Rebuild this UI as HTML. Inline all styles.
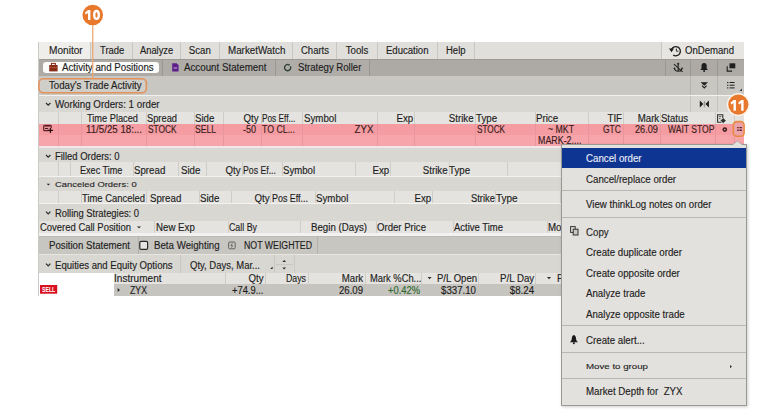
<!DOCTYPE html><html><head><meta charset="utf-8"><style>
html,body{margin:0;padding:0;width:780px;height:414px;overflow:hidden;background:#fff;position:relative}
body{font-family:"Liberation Sans",sans-serif;font-size:10.0px;color:#1e1e1e}
.r{position:absolute}
.t{position:absolute;white-space:nowrap;line-height:12px;-webkit-text-stroke:0.15px currentColor}
.m{transform:scaleX(0.97);transform-origin:0 50%}
</style></head><body>
<div class="r" style="left:39px;top:42px;width:705px;height:17px;background:#e0dfdb;"></div>
<div class="r" style="left:39px;top:42px;width:51px;height:17px;background:#efeeeb;"></div>
<div class="r" style="left:661px;top:42px;width:83px;height:17px;background:#e6e5e1;"></div>
<div class="r" style="left:90px;top:42px;width:1px;height:17px;background:#c9c7c2;"></div>
<div class="r" style="left:132px;top:42px;width:1px;height:17px;background:#c9c7c2;"></div>
<div class="r" style="left:180px;top:42px;width:1px;height:17px;background:#c9c7c2;"></div>
<div class="r" style="left:219px;top:42px;width:1px;height:17px;background:#c9c7c2;"></div>
<div class="r" style="left:292px;top:42px;width:1px;height:17px;background:#c9c7c2;"></div>
<div class="r" style="left:336px;top:42px;width:1px;height:17px;background:#c9c7c2;"></div>
<div class="r" style="left:377px;top:42px;width:1px;height:17px;background:#c9c7c2;"></div>
<div class="r" style="left:437px;top:42px;width:1px;height:17px;background:#c9c7c2;"></div>
<div class="r" style="left:474px;top:42px;width:1px;height:17px;background:#c9c7c2;"></div>
<div class="r" style="left:661px;top:42px;width:1px;height:17px;background:#c9c7c2;"></div>
<div class="r" style="left:39px;top:59px;width:705px;height:17px;background:#adaaa5;"></div>
<div class="r" style="left:162px;top:59px;width:207px;height:17px;background:#b0ada8;"></div>
<div class="r" style="left:39px;top:59px;width:705px;height:1px;background:#9d9a95;"></div>
<div class="r" style="left:162px;top:59px;width:1px;height:17px;background:#9a9792;"></div>
<div class="r" style="left:275px;top:59px;width:1px;height:17px;background:#9a9792;"></div>
<div class="r" style="left:369px;top:59px;width:1px;height:17px;background:#9a9792;"></div>
<div class="r" style="left:665px;top:59px;width:1px;height:17px;background:#9a9792;"></div>
<div class="r" style="left:690px;top:59px;width:1px;height:17px;background:#9a9792;"></div>
<div class="r" style="left:717px;top:59px;width:1px;height:17px;background:#9a9792;"></div>
<div class="r" style="left:39px;top:76px;width:705px;height:19px;background:#c9c7c2;"></div>
<div class="r" style="left:40px;top:79.5px;width:106px;height:12.5px;background:#d0cec9;"></div>
<div class="r" style="left:690px;top:76px;width:1px;height:19px;background:#b6b4af;"></div>
<div class="r" style="left:717px;top:76px;width:1px;height:19px;background:#b6b4af;"></div>
<div class="r" style="left:39px;top:95px;width:705px;height:1px;background:#f3f2f0;"></div>
<div class="r" style="left:39px;top:96px;width:705px;height:16px;background:#d9d7d2;"></div>
<div class="r" style="left:690px;top:96px;width:1px;height:16px;background:#c6c4bf;"></div>
<div class="r" style="left:717px;top:96px;width:1px;height:16px;background:#c6c4bf;"></div>
<div class="r" style="left:39px;top:112px;width:705px;height:12px;background:#e4e3df;"></div>
<div class="r" style="left:58px;top:112px;width:1px;height:12px;background:#cfcdc8;"></div>
<div class="r" style="left:81px;top:112px;width:1px;height:12px;background:#cfcdc8;"></div>
<div class="r" style="left:146px;top:112px;width:1px;height:12px;background:#cfcdc8;"></div>
<div class="r" style="left:194px;top:112px;width:1px;height:12px;background:#cfcdc8;"></div>
<div class="r" style="left:223px;top:112px;width:1px;height:12px;background:#cfcdc8;"></div>
<div class="r" style="left:261px;top:112px;width:1px;height:12px;background:#cfcdc8;"></div>
<div class="r" style="left:302px;top:112px;width:1px;height:12px;background:#cfcdc8;"></div>
<div class="r" style="left:377px;top:112px;width:1px;height:12px;background:#cfcdc8;"></div>
<div class="r" style="left:414px;top:112px;width:1px;height:12px;background:#cfcdc8;"></div>
<div class="r" style="left:475px;top:112px;width:1px;height:12px;background:#cfcdc8;"></div>
<div class="r" style="left:535px;top:112px;width:1px;height:12px;background:#cfcdc8;"></div>
<div class="r" style="left:588px;top:112px;width:1px;height:12px;background:#cfcdc8;"></div>
<div class="r" style="left:623px;top:112px;width:1px;height:12px;background:#cfcdc8;"></div>
<div class="r" style="left:660px;top:112px;width:1px;height:12px;background:#cfcdc8;"></div>
<div class="r" style="left:715px;top:112px;width:1px;height:12px;background:#cfcdc8;"></div>
<div class="r" style="left:734px;top:112px;width:1px;height:12px;background:#cfcdc8;"></div>
<div class="r" style="left:39px;top:124px;width:705px;height:11px;background:#f49ca2;"></div>
<div class="r" style="left:39px;top:135px;width:705px;height:11px;background:#f7a4aa;"></div>
<div class="r" style="left:58px;top:124px;width:1px;height:22px;background:#e8959b;"></div>
<div class="r" style="left:81px;top:124px;width:1px;height:22px;background:#e8959b;"></div>
<div class="r" style="left:146px;top:124px;width:1px;height:22px;background:#e8959b;"></div>
<div class="r" style="left:194px;top:124px;width:1px;height:22px;background:#e8959b;"></div>
<div class="r" style="left:223px;top:124px;width:1px;height:22px;background:#e8959b;"></div>
<div class="r" style="left:261px;top:124px;width:1px;height:22px;background:#e8959b;"></div>
<div class="r" style="left:302px;top:124px;width:1px;height:22px;background:#e8959b;"></div>
<div class="r" style="left:377px;top:124px;width:1px;height:22px;background:#e8959b;"></div>
<div class="r" style="left:414px;top:124px;width:1px;height:22px;background:#e8959b;"></div>
<div class="r" style="left:475px;top:124px;width:1px;height:22px;background:#e8959b;"></div>
<div class="r" style="left:535px;top:124px;width:1px;height:22px;background:#e8959b;"></div>
<div class="r" style="left:588px;top:124px;width:1px;height:22px;background:#e8959b;"></div>
<div class="r" style="left:623px;top:124px;width:1px;height:22px;background:#e8959b;"></div>
<div class="r" style="left:660px;top:124px;width:1px;height:22px;background:#e8959b;"></div>
<div class="r" style="left:715px;top:124px;width:1px;height:22px;background:#e8959b;"></div>
<div class="r" style="left:734px;top:124px;width:1px;height:22px;background:#e8959b;"></div>
<div class="r" style="left:39px;top:146px;width:705px;height:2px;background:#f3e6e6;"></div>
<div class="r" style="left:39px;top:148px;width:705px;height:14px;background:#d9d7d2;"></div>
<div class="r" style="left:39px;top:162px;width:705px;height:14px;background:#e4e3df;"></div>
<div class="r" style="left:58px;top:162px;width:1px;height:14px;background:#cfcdc8;"></div>
<div class="r" style="left:70px;top:162px;width:1px;height:14px;background:#cfcdc8;"></div>
<div class="r" style="left:133px;top:162px;width:1px;height:14px;background:#cfcdc8;"></div>
<div class="r" style="left:178px;top:162px;width:1px;height:14px;background:#cfcdc8;"></div>
<div class="r" style="left:206px;top:162px;width:1px;height:14px;background:#cfcdc8;"></div>
<div class="r" style="left:242px;top:162px;width:1px;height:14px;background:#cfcdc8;"></div>
<div class="r" style="left:282px;top:162px;width:1px;height:14px;background:#cfcdc8;"></div>
<div class="r" style="left:355px;top:162px;width:1px;height:14px;background:#cfcdc8;"></div>
<div class="r" style="left:390px;top:162px;width:1px;height:14px;background:#cfcdc8;"></div>
<div class="r" style="left:449px;top:162px;width:1px;height:14px;background:#cfcdc8;"></div>
<div class="r" style="left:507px;top:162px;width:1px;height:14px;background:#cfcdc8;"></div>
<div class="r" style="left:39px;top:176px;width:705px;height:1px;background:#f3f2f0;"></div>
<div class="r" style="left:39px;top:177px;width:705px;height:14px;background:#d9d7d2;"></div>
<div class="r" style="left:39px;top:191px;width:705px;height:12px;background:#e4e3df;"></div>
<div class="r" style="left:58px;top:191px;width:1px;height:12px;background:#cfcdc8;"></div>
<div class="r" style="left:81px;top:191px;width:1px;height:12px;background:#cfcdc8;"></div>
<div class="r" style="left:146px;top:191px;width:1px;height:12px;background:#cfcdc8;"></div>
<div class="r" style="left:199px;top:191px;width:1px;height:12px;background:#cfcdc8;"></div>
<div class="r" style="left:231px;top:191px;width:1px;height:12px;background:#cfcdc8;"></div>
<div class="r" style="left:270px;top:191px;width:1px;height:12px;background:#cfcdc8;"></div>
<div class="r" style="left:315px;top:191px;width:1px;height:12px;background:#cfcdc8;"></div>
<div class="r" style="left:394px;top:191px;width:1px;height:12px;background:#cfcdc8;"></div>
<div class="r" style="left:432px;top:191px;width:1px;height:12px;background:#cfcdc8;"></div>
<div class="r" style="left:495px;top:191px;width:1px;height:12px;background:#cfcdc8;"></div>
<div class="r" style="left:560px;top:191px;width:1px;height:12px;background:#cfcdc8;"></div>
<div class="r" style="left:39px;top:203px;width:705px;height:1px;background:#f3f2f0;"></div>
<div class="r" style="left:39px;top:204px;width:705px;height:17px;background:#d9d7d2;"></div>
<div class="r" style="left:39px;top:221px;width:705px;height:12px;background:#e4e3df;"></div>
<div class="r" style="left:154px;top:221px;width:1px;height:12px;background:#cfcdc8;"></div>
<div class="r" style="left:228px;top:221px;width:1px;height:12px;background:#cfcdc8;"></div>
<div class="r" style="left:300px;top:221px;width:1px;height:12px;background:#cfcdc8;"></div>
<div class="r" style="left:376px;top:221px;width:1px;height:12px;background:#cfcdc8;"></div>
<div class="r" style="left:453px;top:221px;width:1px;height:12px;background:#cfcdc8;"></div>
<div class="r" style="left:547px;top:221px;width:1px;height:12px;background:#cfcdc8;"></div>
<div class="r" style="left:39px;top:233px;width:705px;height:3px;background:#f3f2f0;"></div>
<div class="r" style="left:39px;top:236px;width:705px;height:18px;background:#c8c6c1;"></div>
<div class="r" style="left:39px;top:236px;width:705px;height:1px;background:#bdbbb6;"></div>
<div class="r" style="left:39px;top:254px;width:705px;height:1px;background:#e6e5e1;"></div>
<div class="r" style="left:138px;top:237px;width:1px;height:17px;background:#b3b1ac;"></div>
<div class="r" style="left:317px;top:237px;width:1px;height:17px;background:#b3b1ac;"></div>
<div class="r" style="left:39px;top:255px;width:705px;height:18px;background:#d9d7d2;"></div>
<div class="r" style="left:180px;top:255px;width:1px;height:18px;background:#c9c7c2;"></div>
<div class="r" style="left:274px;top:255px;width:1px;height:18px;background:#c9c7c2;"></div>
<div class="r" style="left:294px;top:255px;width:1px;height:18px;background:#c9c7c2;"></div>
<div class="r" style="left:39px;top:273px;width:75px;height:23px;background:#ffffff;"></div>
<div class="r" style="left:114px;top:273px;width:630px;height:11px;background:#e4e3df;"></div>
<div class="r" style="left:225px;top:273px;width:1px;height:11px;background:#cfcdc8;"></div>
<div class="r" style="left:265px;top:273px;width:1px;height:11px;background:#cfcdc8;"></div>
<div class="r" style="left:308px;top:273px;width:1px;height:11px;background:#cfcdc8;"></div>
<div class="r" style="left:365px;top:273px;width:1px;height:11px;background:#cfcdc8;"></div>
<div class="r" style="left:421px;top:273px;width:1px;height:11px;background:#cfcdc8;"></div>
<div class="r" style="left:478px;top:273px;width:1px;height:11px;background:#cfcdc8;"></div>
<div class="r" style="left:535px;top:273px;width:1px;height:11px;background:#cfcdc8;"></div>
<div class="r" style="left:114px;top:284px;width:630px;height:12px;background:#c6c4bf;"></div>
<div class="r" style="left:38px;top:42px;width:1px;height:254px;background:#cac9c5;"></div>
<span class="t" style="top:45.1px;left:48.8px;transform:scaleX(1.0120);transform-origin:0 50%;">Monitor</span>
<span class="t" style="top:45.1px;left:99.6px;transform:scaleX(0.9467);transform-origin:0 50%;">Trade</span>
<span class="t" style="top:45.1px;left:140.4px;transform:scaleX(0.9334);transform-origin:0 50%;">Analyze</span>
<span class="t" style="top:45.1px;left:227.6px;transform:scaleX(0.9802);transform-origin:0 50%;">MarketWatch</span>
<span class="t" style="top:45.1px;left:301px;transform:scaleX(0.9497);transform-origin:0 50%;">Charts</span>
<span class="t" style="top:45.1px;left:386px;transform:scaleX(0.9542);transform-origin:0 50%;">Education</span>
<span class="t" style="top:45.1px;left:446px;transform:scaleX(0.9506);transform-origin:0 50%;">Help</span>
<span class="t" style="top:45.1px;left:685px;transform:scaleX(0.9583);transform-origin:0 50%;">OnDemand</span>
<span class="t" style="top:45.1px;right:569.6px;transform:scaleX(0.9700);transform-origin:100% 50%;">Scan</span>
<span class="t" style="top:45.1px;right:411.6px;transform:scaleX(0.9700);transform-origin:100% 50%;">Tools</span>
<span class="t" style="top:62.4px;left:184px;transform:scaleX(0.9747);transform-origin:0 50%;">Account Statement</span>
<span class="t" style="top:62.4px;left:297.6px;transform:scaleX(0.9579);transform-origin:0 50%;">Strategy Roller</span>
<span class="t" style="top:80.4px;left:49px;transform:scaleX(0.9658);transform-origin:0 50%;">Today's Trade Activity</span>
<span class="t" style="top:99.2px;left:55px;transform:scaleX(0.9765);transform-origin:0 50%;">Working Orders: 1 order</span>
<span class="t" style="top:113.4px;left:87px;transform:scaleX(0.9229);transform-origin:0 50%;">Time Placed</span>
<span class="t" style="top:113.4px;left:147px;transform:scaleX(0.9297);transform-origin:0 50%;">Spread</span>
<span class="t" style="top:113.4px;left:261.6px;transform:scaleX(0.8265);transform-origin:0 50%;">Pos Eff...</span>
<span class="t" style="top:113.4px;left:661px;transform:scaleX(0.9524);transform-origin:0 50%;">Status</span>
<span class="t" style="top:113.4px;left:195px;transform:scaleX(0.9700);transform-origin:0 50%;">Side</span>
<span class="t" style="top:113.4px;right:521px;transform:scaleX(0.9700);transform-origin:100% 50%;">Qty</span>
<span class="t" style="top:113.4px;left:303.6px;transform:scaleX(0.9700);transform-origin:0 50%;">Symbol</span>
<span class="t" style="top:113.4px;right:366.4px;transform:scaleX(0.9700);transform-origin:100% 50%;">Exp</span>
<span class="t" style="top:113.4px;right:306px;transform:scaleX(0.9700);transform-origin:100% 50%;">Strike</span>
<span class="t" style="top:113.4px;left:475.5px;transform:scaleX(0.9700);transform-origin:0 50%;">Type</span>
<span class="t" style="top:113.4px;left:536.4px;transform:scaleX(0.9700);transform-origin:0 50%;">Price</span>
<span class="t" style="top:113.4px;right:158px;transform:scaleX(0.9700);transform-origin:100% 50%;">TIF</span>
<span class="t" style="top:113.4px;right:120.6px;transform:scaleX(0.9700);transform-origin:100% 50%;">Mark</span>
<span class="t" style="top:124.4px;left:86px;color:#3a1c20;transform:scaleX(0.9717);transform-origin:0 50%;">11/5/25 18:...</span>
<span class="t" style="top:124.4px;left:148.4px;color:#3a1c20;transform:scaleX(0.8356);transform-origin:0 50%;">STOCK</span>
<span class="t" style="top:124.4px;left:195px;color:#3a1c20;transform:scaleX(0.8595);transform-origin:0 50%;">SELL</span>
<span class="t" style="top:124.4px;left:243px;color:#3a1c20;transform:scaleX(0.9007);transform-origin:0 50%;">-50</span>
<span class="t" style="top:124.4px;left:262px;color:#3a1c20;transform:scaleX(0.8770);transform-origin:0 50%;">TO CL...</span>
<span class="t" style="top:124.4px;left:477px;color:#3a1c20;transform:scaleX(0.8181);transform-origin:0 50%;">STOCK</span>
<span class="t" style="top:124.4px;left:548px;color:#3a1c20;transform:scaleX(0.8757);transform-origin:0 50%;">~ MKT</span>
<span class="t" style="top:124.4px;left:603px;color:#3a1c20;transform:scaleX(0.8517);transform-origin:0 50%;">GTC</span>
<span class="t" style="top:124.4px;left:635px;color:#3a1c20;transform:scaleX(0.9181);transform-origin:0 50%;">26.09</span>
<span class="t" style="top:124.4px;left:667.6px;color:#3a1c20;transform:scaleX(0.8557);transform-origin:0 50%;">WAIT STOP</span>
<span class="t" style="top:124.4px;right:407px;color:#3a1c20;transform:scaleX(0.9700);transform-origin:100% 50%;">ZYX</span>
<span class="t" style="top:134.8px;left:537.6px;color:#3a1c20;transform:scaleX(0.8881);transform-origin:0 50%;">MARK-2....</span>
<span class="t" style="top:151.2px;left:55.4px;transform:scaleX(0.9451);transform-origin:0 50%;">Filled Orders: 0</span>
<span class="t" style="top:165.2px;left:134px;transform:scaleX(0.9700);transform-origin:0 50%;">Spread</span>
<span class="t" style="top:165.2px;left:181px;transform:scaleX(0.9700);transform-origin:0 50%;">Side</span>
<span class="t" style="top:165.2px;right:539px;transform:scaleX(0.9700);transform-origin:100% 50%;">Qty</span>
<span class="t" style="top:165.2px;right:390.6px;transform:scaleX(0.9700);transform-origin:100% 50%;">Exp</span>
<span class="t" style="top:165.2px;right:332px;transform:scaleX(0.9700);transform-origin:100% 50%;">Strike</span>
<span class="t" style="top:165.2px;left:449px;transform:scaleX(0.9700);transform-origin:0 50%;">Type</span>
<span class="t" style="top:165.2px;left:79.6px;transform:scaleX(0.9079);transform-origin:0 50%;">Exec Time</span>
<span class="t" style="top:165.2px;left:243px;transform:scaleX(0.8722);transform-origin:0 50%;">Pos Ef...</span>
<span class="t" style="top:165.2px;left:283px;transform:scaleX(0.9610);transform-origin:0 50%;">Symbol</span>
<span class="t" style="top:179.4px;left:55.4px;transform:scaleX(0.9412) scaleY(0.72);transform-origin:0 57%;">Canceled Orders: 0</span>
<span class="t" style="top:192.8px;left:149.6px;transform:scaleX(0.9700);transform-origin:0 50%;">Spread</span>
<span class="t" style="top:192.8px;left:200px;transform:scaleX(0.9700);transform-origin:0 50%;">Side</span>
<span class="t" style="top:192.8px;right:510.4px;transform:scaleX(0.9700);transform-origin:100% 50%;">Qty</span>
<span class="t" style="top:192.8px;left:316px;transform:scaleX(0.9700);transform-origin:0 50%;">Symbol</span>
<span class="t" style="top:192.8px;right:348.4px;transform:scaleX(0.9700);transform-origin:100% 50%;">Exp</span>
<span class="t" style="top:192.8px;left:82px;transform:scaleX(0.9416);transform-origin:0 50%;">Time Canceled</span>
<span class="t" style="top:192.8px;left:272px;transform:scaleX(0.8908);transform-origin:0 50%;">Pos Eff...</span>
<span class="t" style="top:192.8px;left:471px;transform:scaleX(0.9387);transform-origin:0 50%;">Strike</span>
<span class="t" style="top:192.8px;left:495.5px;transform:scaleX(0.9931);transform-origin:0 50%;">Type</span>
<span class="t" style="top:207.8px;left:55px;transform:scaleX(0.9387);transform-origin:0 50%;">Rolling Strategies: 0</span>
<span class="t" style="top:222.4px;left:40px;transform:scaleX(0.9461);transform-origin:0 50%;">Covered Call Position</span>
<span class="t" style="top:222.4px;left:229px;transform:scaleX(0.8818);transform-origin:0 50%;">Call By</span>
<span class="t" style="top:222.4px;left:377px;transform:scaleX(0.9583);transform-origin:0 50%;">Order Price</span>
<span class="t" style="top:222.4px;left:454px;transform:scaleX(0.9487);transform-origin:0 50%;">Active Time</span>
<span class="t" style="top:222.4px;left:155.6px;transform:scaleX(0.9700);transform-origin:0 50%;">New Exp</span>
<span class="t" style="top:222.4px;left:311px;transform:scaleX(0.9700);transform-origin:0 50%;">Begin (Days)</span>
<span class="t" style="top:222.4px;left:548.4px;transform:scaleX(0.9700);transform-origin:0 50%;">Mo</span>
<span class="t" style="top:240.4px;left:49px;transform:scaleX(0.9652);transform-origin:0 50%;">Position Statement</span>
<span class="t" style="top:240.4px;left:153.6px;transform:scaleX(0.9700);transform-origin:0 50%;">Beta Weighting</span>
<span class="t" style="top:240.4px;left:244px;transform:scaleX(0.8760);transform-origin:0 50%;">NOT WEIGHTED</span>
<span class="t" style="top:259.8px;left:55.4px;transform:scaleX(0.9570);transform-origin:0 50%;">Equities and Equity Options</span>
<span class="t" style="top:259.8px;left:189.6px;transform:scaleX(0.9497);transform-origin:0 50%;">Qty, Days, Mar...</span>
<span class="t" style="top:272.8px;left:114.4px;transform:scaleX(1.0081);transform-origin:0 50%;">Instrument</span>
<span class="t" style="top:272.8px;left:286px;transform:scaleX(0.8778);transform-origin:0 50%;">Days</span>
<span class="t" style="top:272.8px;left:369.6px;transform:scaleX(0.9337);transform-origin:0 50%;">Mark %Ch...</span>
<span class="t" style="top:272.8px;left:437px;transform:scaleX(0.9557);transform-origin:0 50%;">P/L Open</span>
<span class="t" style="top:272.8px;right:516.4px;transform:scaleX(0.9700);transform-origin:100% 50%;">Qty</span>
<span class="t" style="top:272.8px;right:417px;transform:scaleX(0.9700);transform-origin:100% 50%;">Mark</span>
<span class="t" style="top:272.8px;right:246px;transform:scaleX(0.9700);transform-origin:100% 50%;">P/L Day</span>
<span class="t" style="top:272.8px;left:557px;transform:scaleX(0.9700);transform-origin:0 50%;">P</span>
<span class="t" style="top:284.8px;left:129.6px;transform:scaleX(0.8725);transform-origin:0 50%;">ZYX</span>
<span class="t" style="top:284.8px;left:231.6px;transform:scaleX(0.9343);transform-origin:0 50%;">+74.9...</span>
<span class="t" style="top:284.8px;left:339px;transform:scaleX(0.9580);transform-origin:0 50%;">26.09</span>
<span class="t" style="top:284.8px;left:388px;color:#2f6a30;transform:scaleX(0.9349);transform-origin:0 50%;">+0.42%</span>
<span class="t" style="top:284.8px;left:441px;transform:scaleX(0.9672);transform-origin:0 50%;">$337.10</span>
<span class="t" style="top:284.8px;right:246px;transform:scaleX(0.9700);transform-origin:100% 50%;">$8.24</span>
<!-- pill -->
<div class="r" style="left:43px;top:61.5px;width:115.5px;height:11px;background:#fbfbfa;border-radius:3px"></div>
<span class="t m" style="left:62px;top:61.6px">Activity and Positions</span>
<svg class="r" style="left:0;top:0" width="780" height="414" viewBox="0 0 780 414">
 <!-- briefcase -->
 <rect x="49.2" y="65" width="8.4" height="6.4" fill="#8a2d18"/>
 <rect x="51.4" y="63.4" width="4" height="2" fill="none" stroke="#8a2d18" stroke-width="1"/>
 <line x1="49.2" y1="67.6" x2="57.6" y2="67.6" stroke="#c07050" stroke-width="0.6"/>
 <!-- account statement doc -->
 <path d="M172.2 63.2 h4.4 l2 2 v6.4 h-6.4z" fill="#5e1f8c"/>
 <line x1="173.6" y1="68" x2="177.2" y2="68" stroke="#e8d8f0" stroke-width="0.8"/>
 <!-- strategy roller -->
 <path d="M290.4 66.2 A3.1 3.1 0 1 1 289.6 65.2" fill="none" stroke="#2f4232" stroke-width="1.4"/>
 <!-- OnDemand icon -->
 <path d="M671.6 49.2 A4.6 4.6 0 1 1 673.2 55" fill="none" stroke="#1e1e1e" stroke-width="1.3"/>
 <path d="M669 48.6 l5 0 l-2.5 3.6z" fill="#1e1e1e"/>
 <path d="M676.4 48.6 v2.6 h2" fill="none" stroke="#1e1e1e" stroke-width="0.9"/>
 <!-- anchor-ish -->
 <circle cx="678.2" cy="63.8" r="1.1" fill="#222"/>
 <path d="M678.2 64.5 v6.6 M674.4 68 Q674.6 71.3 678.2 71.3 Q681.8 71.3 682 68 M674 64.2 L682.6 71.8" fill="none" stroke="#222" stroke-width="1.1"/>
 <path d="M673.2 68.8 l1.2 -1.6 l1.4 1.6z M680.8 68.8 l1.2 -1.6 l1.4 1.6z" fill="#222"/>
 <!-- bell -->
 <path d="M700.2 70 h7.8 l-1.3 -1.6 v-2.6 q0 -2.6 -2.6 -2.8 q-2.6 .2 -2.6 2.8 v2.6z" fill="#1e1e1e"/>
 <circle cx="704.1" cy="71" r="1" fill="#1e1e1e"/>
 <!-- window restore -->
 <rect x="729.5" y="63.3" width="5.8" height="5" fill="#1e1e1e"/>
 <path d="M727.2 66.2 v4.9 h4.9" fill="none" stroke="#1e1e1e" stroke-width="1.1"/>
 <!-- row3 icons -->
 <path d="M700.6 82.2 h7.4 l-3.7 3.6z" fill="#1e1e1e"/>
 <path d="M702 85.6 l2.3 2.4 l2.3 -2.4" fill="none" stroke="#1e1e1e" stroke-width="1.1"/>
 <path d="M727 82.5 h1.4 M729.6 82.5 h5 M727 85.2 h1.4 M729.6 85.2 h5 M727 87.9 h1.4 M729.6 87.9 h5" stroke="#1e1e1e" stroke-width="1"/>
 <path d="M742 88.6 v2.4 h-2.4z" fill="#333"/>
 <!-- row4 icon -->
 <path d="M699.8 100.4 L703.3 104 L699.8 107.6z M708.9 100.4 L705.4 104 L708.9 107.6z" fill="#1a1a1a"/>
 <line x1="704.35" y1="101" x2="704.35" y2="107.2" stroke="#777" stroke-width="0.8"/>
 <!-- chevrons -->
 <g fill="none" stroke="#2a2a2a" stroke-width="1.2">
  <path d="M46 103 l2.2 2.2 l2.2 -2.2"/>
  <path d="M46 155 l2.2 2.2 l2.2 -2.2"/>
  
  <path d="M46 211.6 l2.2 2.2 l2.2 -2.2"/>
  <path d="M46 263.6 l2.2 2.2 l2.2 -2.2"/>
 </g>
 <path d="M136.9 226.4 h4.2 l-2.1 1.8z" fill="#2a2a2a"/>
 <path d="M46.6 183.8 h3.6 l-1.8 1.6z" fill="#2a2a2a"/>
 <path d="M427.6 277 h4 l-2 2.2z" fill="#2a2a2a"/>
 <path d="M547 277 h4 l-2 2.2z" fill="#2a2a2a"/>
 <path d="M117.6 288 l2.4 2 l-2.4 2z" fill="#2a2a2a"/>
 <!-- spinner -->
 <path d="M282.4 262 h3.6 l-1.8 -2z M282.4 267.4 h3.6 l-1.8 2z" fill="#2a2a2a"/>
 <line x1="276" y1="264.6" x2="293" y2="264.6" stroke="#c9c7c2" stroke-width="1"/>
 <path d="M272.6 266.6 v2.4 h-2.4z" fill="#333"/>
 <!-- checkbox -->
 <rect x="139.8" y="241.4" width="7.8" height="8.0" rx="1.2" fill="#e6e5e1" stroke="#2a2a2a" stroke-width="1.2"/>
 <!-- not weighted icon -->
 <rect x="228.6" y="242" width="6.6" height="6.8" rx="1" fill="none" stroke="#5a5a5a" stroke-width="0.9"/>
 <path d="M232.4 243.2 l-1.6 2.4 h2 l-1.4 2" fill="none" stroke="#5a5a5a" stroke-width="0.8"/>
 <!-- pink row icon -->
 <path d="M48.2 130.6 h-3.6 q-0.9 0 -0.9 -0.9 v-3.5 q0 -0.9 0.9 -0.9 h5.8 q0.9 0 0.9 0.9 v1.6" fill="none" stroke="#5a1f24" stroke-width="1.2"/>
 <line x1="44.8" y1="126.4" x2="50.6" y2="126.4" stroke="#7a3a40" stroke-width="0.9"/>
 <line x1="45" y1="128.5" x2="48.2" y2="128.5" stroke="#4a1a1e" stroke-width="1.1"/>
 <path d="M47.8 130.4 h5.2 M50.4 127.8 v5.2" stroke="#2a0e10" stroke-width="1.3"/>
 <!-- header doc/gear icon -->
 <path d="M721.4 122.3 h-3.8 v-7.6 h5.2 v3.2" fill="none" stroke="#333" stroke-width="1.1"/>
 <path d="M719 116.6 h2.4 M719 118.6 h1.6" stroke="#555" stroke-width="0.9"/>
 <circle cx="723.2" cy="120.6" r="1.9" fill="#2a2a2a"/>
 <circle cx="723.2" cy="120.6" r="0.7" fill="#e4e3df"/>
 <path d="M723.2 118 v5.2 M720.6 120.6 h5.2" stroke="#2a2a2a" stroke-width="0.8"/>
 <!-- gear in pink -->
 <circle cx="724.8" cy="129.6" r="2.3" fill="#3a1a1a"/>
 <circle cx="724.8" cy="129.6" r="0.8" fill="#f7a9ad"/>
 <!-- ≡ button in pink -->
 <rect x="733.5" y="122" width="10.5" height="14" rx="3" fill="#eba3a9"/>
 <path d="M737.2 126.9 h1.5 v1.3 h-1.5z M739.5 126.9 h2.4 v1.3 h-2.4z M737.2 129.6 h1.5 v1.4 h-1.5z M739.5 129.6 h2.4 v1.4 h-2.4z" fill="#5a2226"/>
 <!-- SELL badge -->
 <rect x="40" y="285" width="17.2" height="8.7" fill="#d8101f"/>
 <text x="42" y="291.7" font-family="Liberation Sans" font-weight="bold" font-size="6.9" fill="#fff" textLength="13.2" lengthAdjust="spacingAndGlyphs">SELL</text>
 <!-- orange annotation: 10 -->
 <line x1="92.75" y1="24" x2="92.75" y2="78.5" stroke="#eea46a" stroke-width="1.2"/>
 <circle cx="92.75" cy="15" r="10.3" fill="#e8782c"/>
 <path d="M88 9.9 h2.4 v10.1 h-2.4 v-7.1 l-2.2 1.5 l-0.9 -1.7z" fill="#fff"/>
 <ellipse cx="96.5" cy="14.95" rx="2.3" ry="3.9" fill="none" stroke="#fff" stroke-width="2.4"/>
 <rect x="38.9" y="78.7" width="107.5" height="14" rx="4.5" fill="none" stroke="#e3925a" stroke-width="1.6"/>
 <!-- orange box in pink row -->
 <rect x="733.3" y="121.6" width="10.8" height="14.6" rx="3.5" fill="none" stroke="#ea8a40" stroke-width="1.6"/>
</svg>
<!-- context menu -->
<div class="r" style="left:561px;top:144px;width:183.5px;height:259.6px;background:#e3e1dd;border:1px solid #9a9894;box-shadow:1px 1px 3px rgba(0,0,0,0.2)"></div>
<svg class="r" style="left:0;top:0" width="780" height="414" viewBox="0 0 780 414">
 <path d="M733 144.5 l4.4 -3.6 l4.4 3.6z" fill="#e3e1dd" stroke="#a7a5a1" stroke-width="0.8"/>
 <rect x="733.6" y="144" width="7.8" height="1.4" fill="#e3e1dd"/>
</svg>
<div class="r" style="left:562px;top:148px;width:183.5px;height:20px;background:#0f3593"></div>
<div class="r" style="left:562px;top:190px;width:183.5px;height:1px;background:#b9b7b2"></div>
<div class="r" style="left:562px;top:217px;width:183.5px;height:1px;background:#b9b7b2"></div>
<div class="r" style="left:562px;top:325px;width:183.5px;height:1px;background:#b9b7b2"></div>
<div class="r" style="left:562px;top:352px;width:183.5px;height:1px;background:#b9b7b2"></div>
<div class="r" style="left:562px;top:378px;width:183.5px;height:1px;background:#b9b7b2"></div>
<span class="t m" style="left:585.6px;top:153.3px;color:#e6ebf7">Cancel order</span>
<span class="t m" style="left:585.6px;top:173.9px">Cancel/replace order</span>
<span class="t m" style="left:585.6px;top:198.9px">View thinkLog notes on order</span>
<span class="t m" style="left:585.6px;top:226.5px">Copy</span>
<span class="t m" style="left:585.6px;top:247.3px">Create duplicate order</span>
<span class="t m" style="left:585.6px;top:267.9px">Create opposite order</span>
<span class="t m" style="left:585.6px;top:287.9px">Analyze trade</span>
<span class="t m" style="left:585.6px;top:308.5px">Analyze opposite trade</span>
<span class="t m" style="left:585.6px;top:334.5px">Create alert...</span>
<span class="t" style="left:586px;top:359.6px;transform:scaleX(0.97) scaleY(0.8);transform-origin:0 74%">Move to group</span>
<span class="t m" style="left:585.6px;top:385.9px">Market Depth for&nbsp; ZYX</span>
<svg class="r" style="left:0;top:0" width="780" height="414" viewBox="0 0 780 414">
 <rect x="570.6" y="226.6" width="4.6" height="5.8" fill="none" stroke="#333" stroke-width="1"/>
 <rect x="573.2" y="229.2" width="4.8" height="5.8" fill="#c9c7c3" stroke="#333" stroke-width="1"/>
 <path d="M569.8 342.3 q1.6 -1 1.9 -3 l0.3 -2.2 q0.3 -2 1.9 -2.2 q1.6 .2 1.9 2.2 l0.3 2.2 q0.3 2 1.9 3z" fill="#1a1a1a"/>
 <circle cx="573.9" cy="343.2" r="1" fill="#1a1a1a"/>
 <path d="M730 365 l2 1.6 l-2 1.6z" fill="#333"/>
</svg>
<!-- circle 11 -->
<svg class="r" style="left:0;top:0" width="780" height="414" viewBox="0 0 780 414">
 <circle cx="738.3" cy="104.6" r="11.6" fill="#fdf3ea" fill-opacity="0.9"/>
 <circle cx="738.3" cy="104.6" r="10.1" fill="#e8782c"/>
 <path d="M733.5 99.9 h2.4 v10.9 h-2.4 v-7.7 l-2.1 1.4 l-0.9 -1.7z" fill="#fff"/>
 <path d="M741.2 99.9 h2.4 v10.9 h-2.4 v-7.7 l-2.1 1.4 l-0.9 -1.7z" fill="#fff"/>
</svg>

</body></html>
